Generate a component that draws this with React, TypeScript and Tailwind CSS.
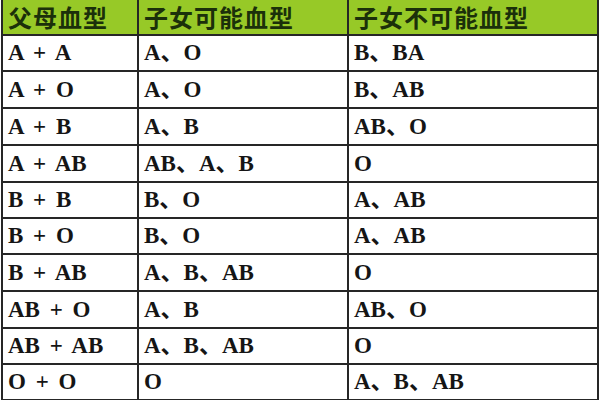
import React from "react";

const rows = [
  ["A + A", "A、O", "B、BA"],
  ["A + O", "A、O", "B、AB"],
  ["A + B", "A、B", "AB、O"],
  ["A + AB", "AB、A、B", "O"],
  ["B + B", "B、O", "A、AB"],
  ["B + O", "B、O", "A、AB"],
  ["B + AB", "A、B、AB", "O"],
  ["AB + O", "A、B", "AB、O"],
  ["AB + AB", "A、B、AB", "O"],
  ["O + O", "O", "A、B、AB"],
];

const heights = ["h-[36px]", "h-[37px]", "h-[37px]", "h-[37px]", "h-[36px]", "h-[36px]", "h-[37px]", "h-[37px]", "h-[36px]", "h-[36px]"];

const widths = ["w-[136px]", "w-[210px]", "w-[250px]"];

export default function App() {
  return (
    <div className="w-[600px] h-[400px] overflow-hidden bg-white pl-[1px]">
      <div className="w-[598px] border-l-2 border-[#262626]">
        {/* Header */}
        <div className="flex h-[36px] border-b-2 border-[#262626] bg-[#97c927]">
          {["父母血型", "子女可能血型", "子女不可能血型"].map((h, i) => (
            <div
              key={i}
              className={`${widths[i]} flex items-center border-r-2 border-[#262626] pl-[5px] text-[24px] leading-[30px] font-bold tracking-[1px] text-[#1b300a] font-['Noto_Sans_CJK_SC',sans-serif]`}
            >
              {h}
            </div>
          ))}
        </div>

        {/* Body */}
        {rows.map((r, ri) => (
          <div key={ri} className={`flex ${heights[ri]} border-b-2 border-[#262626]`}>
            {r.map((c, ci) => (
              <div
                key={ci}
                className={`${widths[ci]} flex items-center whitespace-pre border-r-2 border-[#262626] pl-[5px] text-[23px] leading-[28px] font-bold text-[#151515] [word-spacing:4px] font-['Liberation_Serif','Noto_Sans_CJK_SC',serif]`}
              >
                {c}
              </div>
            ))}
          </div>
        ))}
      </div>
    </div>
  );
}
